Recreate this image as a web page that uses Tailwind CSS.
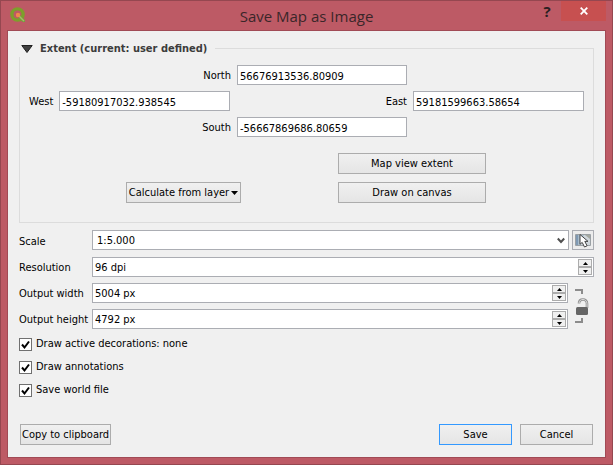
<!DOCTYPE html>
<html lang="en">
<head>
<meta charset="utf-8">
<title>Save Map as Image</title>
<script src="https://cdn.jsdelivr.net/npm/@tailwindcss/browser@4"></script>
</head>
<body class="font-['DejaVu_Sans_Condensed','DejaVu_Sans',sans-serif] text-[11px] leading-[14px] text-black">
<div class="flex min-h-screen flex-col border border-[#954750] bg-[#bd5a65] px-[6px] pb-[6px]">
  <header class="relative flex h-[29px] items-center justify-center">
    <svg class="absolute top-[6px] left-[3px] size-4" viewBox="0 0 16 16" aria-hidden="true">
      <circle cx="7.5" cy="7.5" r="5.6" fill="none" stroke="#7d9f2b" stroke-width="3.4"/>
      <path d="M8 8l1.500-.5 5.500 5.500v2h-2.500L8 10z" fill="#72a03c"/>
      <path d="M8 8l6 6" stroke="#a9b867" stroke-width="1.4"/>
      <circle cx="8" cy="8" r="2.200" fill="#f08a4a"/>
    </svg>
    <h1 class="font-['Open_Sans',sans-serif] text-[15px] leading-5 text-[#3a2629]">Save Map as Image</h1>
    <div class="absolute top-0 right-0 flex">
      <button class="h-5 w-[28px] font-['Open_Sans',sans-serif] text-[15px] leading-5 font-bold text-[#2b2022]" aria-label="Help">?</button>
      <button class="flex h-5 w-[45px] items-center justify-center bg-[#c75050]" aria-label="Close">
        <svg class="size-2" viewBox="0 0 8 8" aria-hidden="true"><path d="M.7 .7l6.6 6.6M7.3 .7L.7 7.3" stroke="#fff" stroke-width="1.8"/></svg>
      </button>
    </div>
  </header>

  <main class="flex flex-1 flex-col border border-[#a14a55] bg-[#f0f0f0] px-[11px] pt-2 pb-3">
    <fieldset class="border border-[#dcdcdc] px-[9px] pb-[19px]">
      <legend class="-ml-[10px] flex h-[18px] items-center bg-[#f0f0f0] pr-2 pt-[2px] font-bold text-[#3c3c3c]">
        <button class="flex w-[21px] pl-[2px]" aria-label="Collapse extent">
          <svg class="h-2 w-3" viewBox="0 0 12 8" aria-hidden="true"><path d="M.8 .5h10.4L6 7.5z" fill="#404040" stroke="#202020"/></svg>
        </button>
        Extent (current: user defined)
      </legend>
      <div class="flex flex-col gap-[6px] pt-2">
        <div class="grid grid-cols-[208fr_170fr_177fr] items-center">
          <label for="north" class="pt-[2px] pr-[6px] text-right">North</label>
          <input id="north" value="56676913536.80909" class="h-5 w-full border border-[#abadb3] bg-white px-[2px] pt-[2px]">
        </div>
        <div class="flex items-center justify-between">
          <div class="flex items-center gap-[6px]">
            <label for="west" class="pt-[2px]">West</label>
            <input id="west" value="-59180917032.938545" class="h-5 w-[171px] border border-[#abadb3] bg-white px-[2px] pt-[2px]">
          </div>
          <div class="flex items-center gap-[6px]">
            <label for="east" class="pt-[2px]">East</label>
            <input id="east" value="59181599663.58654" class="h-5 w-[171px] border border-[#abadb3] bg-white px-[2px] pt-[2px]">
          </div>
        </div>
        <div class="grid grid-cols-[208fr_170fr_177fr] items-center">
          <label for="south" class="pt-[2px] pr-[6px] text-right">South</label>
          <input id="south" value="-56667869686.80659" class="h-5 w-full border border-[#abadb3] bg-white px-[2px] pt-[2px]">
        </div>
      </div>
      <div class="mt-4 grid grid-cols-[309fr_148fr_98fr] gap-y-2">
        <button class="col-start-2 h-[21px] border border-[#acacac] bg-linear-to-b from-[#f0f0f0] to-[#e5e5e5] pt-px">Map view extent</button>
        <button class="col-start-1 flex h-[21px] items-center gap-[2px] justify-self-center border border-[#acacac] bg-linear-to-b from-[#f0f0f0] to-[#e5e5e5] px-[2px] pt-px">Calculate from layer
          <svg class="h-1 w-[7px]" viewBox="0 0 7 4" aria-hidden="true"><path d="M0 0h7L3.5 4z"/></svg>
        </button>
        <button class="h-[21px] border border-[#acacac] bg-linear-to-b from-[#f0f0f0] to-[#e5e5e5] pt-px">Draw on canvas</button>
      </div>
    </fieldset>

    <div class="mt-[7px] grid grid-cols-[73px_1fr_26px] grid-rows-[21px_20px_20px_20px] items-center gap-y-[6px]">
      <label for="scale" class="pt-[2px]">Scale</label>
      <div class="relative mr-[-1px] pb-px">
        <select id="scale" class="block h-5 w-full appearance-none border border-[#abadb3] bg-white pt-[2px] pl-1"><option>1:5.000</option></select>
        <svg class="pointer-events-none absolute top-[7px] right-1 h-[7px] w-2" viewBox="0 0 8 7" aria-hidden="true"><path d="M.8 1.5L4 5l3.2-3.5" fill="none" stroke="#505050" stroke-width="2"/></svg>
      </div>
      <button class="mb-px ml-1 flex h-5 w-[22px] items-center justify-center border border-[#abadb3] bg-[#ececec]" aria-label="Set scale from map canvas">
        <svg class="h-4 w-[18px]" viewBox="0 0 18 16" aria-hidden="true">
          <path d="M1.5 2.5h15v11h-15z" fill="#cfd6db" stroke="#9aa0a4"/>
          <path d="M2 3h2v10H2z" fill="#7f99b3"/><path d="M4 3h6L6 13H4z" fill="#a8bccb"/><path d="M11 3h5v4z" fill="#a3a79f"/>
          <path d="M6 2.500v9.800l2.200-1.900 2.300 4.600 2.600-1.200-2.300-4.400h3.200z" fill="#fff" stroke="#444" stroke-width="1"/>
        </svg>
      </button>

      <label for="resolution" class="pt-[2px]">Resolution</label>
      <div class="col-span-2 flex h-5 border border-[#abadb3] bg-white">
        <input id="resolution" value="96 dpi" class="min-w-0 flex-1 px-[2px] pt-[2px]">
        <div class="flex w-4 flex-col p-px">
          <button class="flex flex-1 items-center justify-center border border-[#acacac] bg-[#f0f0f0]" aria-label="Increase resolution"><svg class="h-[3px] w-[5px]" viewBox="0 0 5 3" aria-hidden="true"><path d="M0 3h5L2.500 0z"/></svg></button>
          <button class="flex flex-1 items-center justify-center border border-[#acacac] bg-[#f0f0f0]" aria-label="Decrease resolution"><svg class="h-[3px] w-[5px]" viewBox="0 0 5 3" aria-hidden="true"><path d="M0 0h5L2.500 3z"/></svg></button>
        </div>
      </div>

      <label for="width" class="pt-[2px]">Output width</label>
      <div class="flex h-5 border border-[#abadb3] bg-white">
        <input id="width" value="5004 px" class="min-w-0 flex-1 px-[2px] pt-[2px]">
        <div class="flex w-4 flex-col p-px">
          <button class="flex flex-1 items-center justify-center border border-[#acacac] bg-[#f0f0f0]" aria-label="Increase width"><svg class="h-[3px] w-[5px]" viewBox="0 0 5 3" aria-hidden="true"><path d="M0 3h5L2.500 0z"/></svg></button>
          <button class="flex flex-1 items-center justify-center border border-[#acacac] bg-[#f0f0f0]" aria-label="Decrease width"><svg class="h-[3px] w-[5px]" viewBox="0 0 5 3" aria-hidden="true"><path d="M0 0h5L2.500 3z"/></svg></button>
        </div>
      </div>
      <button class="row-span-2 flex items-center pl-[7px]" aria-label="Lock aspect ratio">
        <svg class="h-9 w-[14px]" viewBox="0 0 14 36" aria-hidden="true">
          <path d="M0 2h7V6M0 34h7V30" fill="none" stroke="#8c8c8c" stroke-width="2"/>
          <path d="M4 15.500c0-3 2-4 4-4s4 1.500 4 4V20" fill="none" stroke="#8f8f8f" stroke-width="2.600"/>
          <path d="M4 15.500c0-3 2-4 4-4s4 1.500 4 4V20" fill="none" stroke="#dedede" stroke-width="1"/>
          <rect x="1" y="19" width="12" height="8" rx="1.500" fill="#666"/>
        </svg>
      </button>

      <label for="height" class="pt-[2px]">Output height</label>
      <div class="flex h-5 border border-[#abadb3] bg-white">
        <input id="height" value="4792 px" class="min-w-0 flex-1 px-[2px] pt-[2px]">
        <div class="flex w-4 flex-col p-px">
          <button class="flex flex-1 items-center justify-center border border-[#acacac] bg-[#f0f0f0]" aria-label="Increase height"><svg class="h-[3px] w-[5px]" viewBox="0 0 5 3" aria-hidden="true"><path d="M0 3h5L2.500 0z"/></svg></button>
          <button class="flex flex-1 items-center justify-center border border-[#acacac] bg-[#f0f0f0]" aria-label="Decrease height"><svg class="h-[3px] w-[5px]" viewBox="0 0 5 3" aria-hidden="true"><path d="M0 0h5L2.500 3z"/></svg></button>
        </div>
      </div>
    </div>

    <div class="mt-2 flex flex-col items-start gap-[9px]">
      <label class="relative flex items-center gap-1">
        <input type="checkbox" checked class="peer size-[13px] appearance-none border border-[#707070] bg-white">
        <svg class="pointer-events-none absolute left-0 hidden size-[13px] peer-checked:block" viewBox="0 0 13 13" aria-hidden="true"><path d="M3 6.500l2.500 3L10 3.500" fill="none" stroke="#000" stroke-width="2"/></svg>
        Draw active decorations: none
      </label>
      <label class="relative flex items-center gap-1">
        <input type="checkbox" checked class="peer size-[13px] appearance-none border border-[#707070] bg-white">
        <svg class="pointer-events-none absolute left-0 hidden size-[13px] peer-checked:block" viewBox="0 0 13 13" aria-hidden="true"><path d="M3 6.500l2.500 3L10 3.500" fill="none" stroke="#000" stroke-width="2"/></svg>
        Draw annotations
      </label>
      <label class="relative flex items-center gap-1">
        <input type="checkbox" checked class="peer size-[13px] appearance-none border border-[#707070] bg-white">
        <svg class="pointer-events-none absolute left-0 hidden size-[13px] peer-checked:block" viewBox="0 0 13 13" aria-hidden="true"><path d="M3 6.500l2.500 3L10 3.500" fill="none" stroke="#000" stroke-width="2"/></svg>
        Save world file
      </label>
    </div>

    <footer class="mt-auto flex gap-2 px-px">
      <button class="mr-auto h-[21px] border border-[#acacac] bg-linear-to-b from-[#f0f0f0] to-[#e5e5e5] px-[1px] pt-px">Copy to clipboard</button>
      <button class="h-[21px] w-[73px] border border-[#3399ff] bg-linear-to-b from-[#f0f0f0] to-[#e5e5e5] pt-px">Save</button>
      <button class="h-[21px] w-[73px] border border-[#acacac] bg-linear-to-b from-[#f0f0f0] to-[#e5e5e5] pt-px">Cancel</button>
    </footer>
  </main>
</div>
</body>
</html>
